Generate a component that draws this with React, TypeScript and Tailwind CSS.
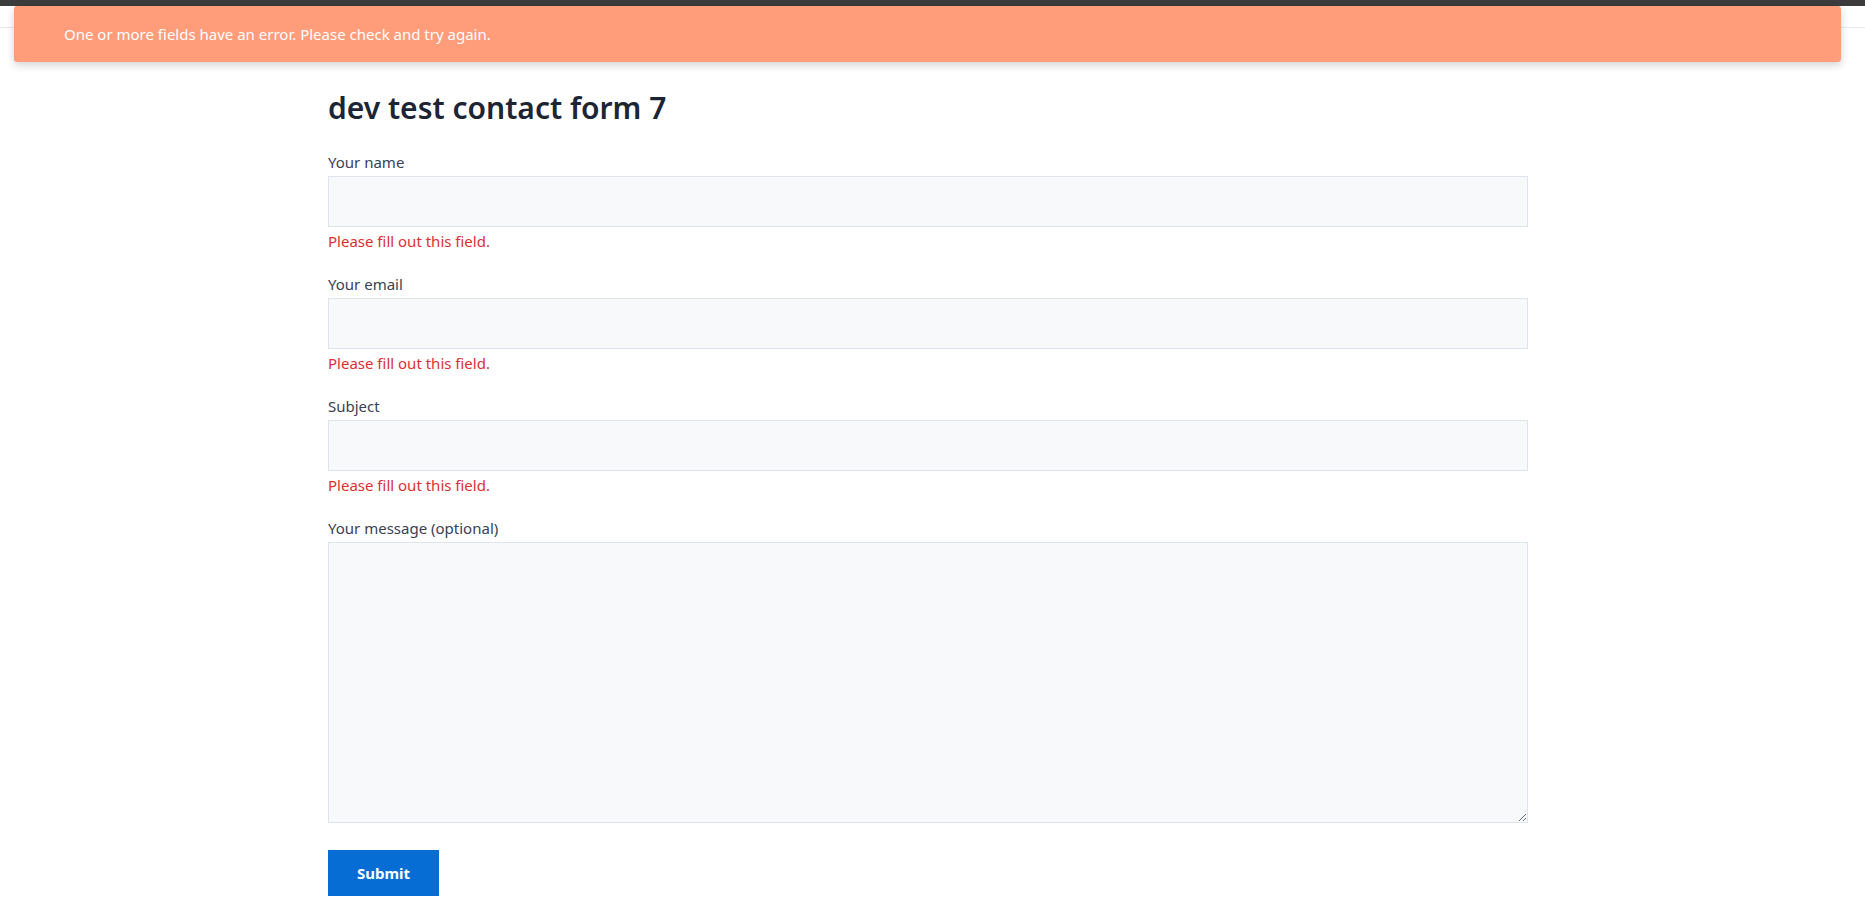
import React from "react";

/* ---------------------------------- Data ---------------------------------- */
type Field = {
  label: string;
  error?: boolean;
};

const fields: Field[] = [
  { label: "Your name", error: true },
  { label: "Your email", error: true },
  { label: "Subject", error: true },
];

/* ------------------------------ Main Function ----------------------------- */
export default function App() {
  return (
    <div className="relative min-h-screen bg-white font-['Noto_Sans','Open_Sans',sans-serif]">
      <div className="h-[6px] bg-[#3c3c3c]" />
      <div className="h-[22px] border-b border-[#e8e8e8]" />

      <main className="pl-[328px] pb-10">
        <h1 className="mt-[62px] text-[30px] leading-[36px] font-semibold text-[#1d2433]">
          dev test contact form 7
        </h1>

        <form className="mt-[25px] flex w-[1200px] flex-col gap-[21px]" onSubmit={(e) => e.preventDefault()}>
          {fields.map((f) => (
            <div key={f.label} className="flex flex-col">
              <label className="text-[15px] leading-[22px] text-[#3a4152]">{f.label}</label>
              <input
                type="text"
                className="mt-[3px] h-[51px] w-full border border-[#dfe4ec] bg-[#f8f9fb] px-3 outline-none"
              />
              {f.error && (
                <span className="mt-[3px] text-[15px] leading-[22px] text-[#dc3034]">
                  Please fill out this field.
                </span>
              )}
            </div>
          ))}

          <div className="flex flex-col">
            <label className="text-[15px] leading-[22px] text-[#3a4152]">Your message (optional)</label>
            <textarea className="mt-[3px] h-[281px] w-full border border-[#dfe4ec] bg-[#f8f9fb] p-3 outline-none" />
          </div>

          <button
            type="submit"
            className="mt-[6px] h-[46px] w-[111px] bg-[#056dd3] text-[15px] font-bold text-white"
          >
            Submit
          </button>
        </form>
      </main>

      {/* toast */}
      <div className="absolute left-[14px] right-[24px] top-[6px] flex h-[56px] items-center rounded-[3px] bg-[#ff9874]/95 pl-[50px] text-[15px] text-white shadow-[0_3px_8px_rgba(0,0,0,0.18)]">
        One or more fields have an error. Please check and try again.
      </div>
    </div>
  );
}
